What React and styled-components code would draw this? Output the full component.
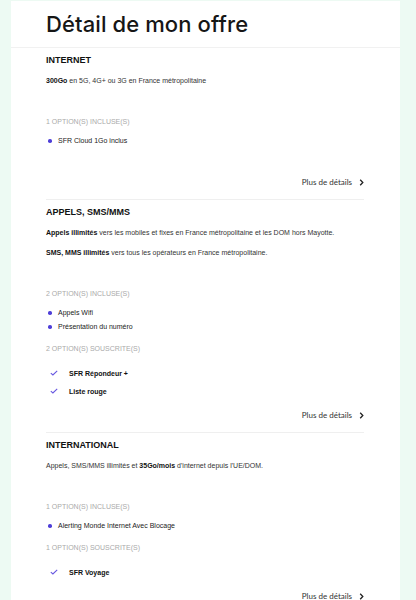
import React from "react";
import styled, { createGlobalStyle } from "styled-components";

const Global = createGlobalStyle`
  html, body { margin: 0; padding: 0; background: #edfaf3; }
  body { font-family: "Liberation Sans", Arial, sans-serif; }
  * { box-sizing: border-box; }
`;

const Page = styled.div`
  padding: 1px 16px 0 11px;
`;

const Card = styled.div`
  background: #fff;
  min-height: 600px;
`;

const Header = styled.header`
  height: 47px;
  display: flex;
  align-items: center;
  padding: 0 35px;
  border-bottom: 1px solid #f1f1f1;
`;

const Title = styled.h1`
  margin: 0;
  font-family: Inter, "Open Sans", sans-serif;
  font-weight: 500;
  font-size: 22px;
  color: #161616;
  letter-spacing: 0.1px;
`;

const Content = styled.div`
  padding: 0 36px 0 35px;
`;

const Section = styled.section`
  padding: 6px 0 11px;
  border-bottom: ${(p) => (p.$last ? "none" : "1px solid #efefef")};
`;

const Heading = styled.h2`
  margin: 0;
  font-size: 9px;
  line-height: 12px;
  font-weight: 700;
  color: #111;
`;

const Para = styled.p`
  margin: 10px 0 0;
  font-size: 7px;
  line-height: 10px;
  color: #333;
  b { color: #111; font-weight: 700; }
`;

const Label = styled.div`
  margin-top: ${(p) => p.$mt}px;
  font-size: 7px;
  line-height: 10px;
  color: #aaa;
  text-transform: uppercase;
`;

const BulletList = styled.ul`
  list-style: none;
  margin: 9px 0 0;
  padding: 0;
  display: flex;
  flex-direction: column;
  gap: 4px;
`;

const Bullet = styled.li`
  display: flex;
  align-items: center;
  font-size: 7px;
  line-height: 10px;
  color: #222;
  &::before {
    content: "";
    flex: none;
    width: 3.5px;
    height: 3.5px;
    border-radius: 50%;
    background: #4f3fd8;
    margin: 0 6.5px 0 2px;
  }
`;

const CheckList = styled.ul`
  list-style: none;
  margin: 10px 0 0;
  padding: 0;
`;

const CheckItem = styled.li`
  display: flex;
  align-items: center;
  height: 18px;
  font-size: 7px;
  font-weight: 700;
  color: #111;
  svg { margin: 0 11px 0 4px; flex: none; }
`;

const MoreRow = styled.div`
  margin-top: ${(p) => p.$mt}px;
  display: flex;
  justify-content: flex-end;
  align-items: center;
  height: 12px;
`;

const MoreLink = styled.a`
  display: flex;
  align-items: center;
  gap: 7px;
  font-family: Lato, "Open Sans", sans-serif;
  font-size: 8px;
  color: #333;
  text-decoration: none;
`;

const Check = () => (
  <svg width="8" height="6" viewBox="0 0 8 6">
    <path d="M0.8 3.2 L2.9 5 L7.2 0.8" fill="none" stroke="#6757e0" strokeWidth="1.1" />
  </svg>
);

const Chevron = () => (
  <svg width="5" height="7" viewBox="0 0 5 7">
    <path d="M1.2 0.8 L3.8 3.5 L1.2 6.2" fill="none" stroke="#222" strokeWidth="1.3" />
  </svg>
);

const More = ({ mt }) => (
  <MoreRow $mt={mt}>
    <MoreLink href="#">
      Plus de détails <Chevron />
    </MoreLink>
  </MoreRow>
);

export default function App() {
  return (
    <>
      <Global />
      <Page>
        <Card>
          <Header>
            <Title>Détail de mon offre</Title>
          </Header>
          <Content>
            <Section>
              <Heading>INTERNET</Heading>
              <Para>
                <b>300Go</b> en 5G, 4G+ ou 3G en France métropolitaine
              </Para>
              <Label $mt={31}>1 option(s) incluse(s)</Label>
              <BulletList>
                <Bullet>SFR Cloud 1Go inclus</Bullet>
              </BulletList>
              <More mt={30} />
            </Section>
            <Section>
              <Heading>APPELS, SMS/MMS</Heading>
              <Para>
                <b>Appels illimités</b> vers les mobiles et fixes en France métropolitaine et les DOM hors Mayotte.
              </Para>
              <Para>
                <b>SMS, MMS illimités</b> vers tous les opérateurs en France métropolitaine.
              </Para>
              <Label $mt={31}>2 option(s) incluse(s)</Label>
              <BulletList>
                <Bullet>Appels Wifi</Bullet>
                <Bullet>Présentation du numéro</Bullet>
              </BulletList>
              <Label $mt={12}>2 option(s) souscrite(s)</Label>
              <CheckList>
                <CheckItem><Check />SFR Répondeur +</CheckItem>
                <CheckItem><Check />Liste rouge</CheckItem>
              </CheckList>
              <More mt={9} />
            </Section>
            <Section $last>
              <Heading>INTERNATIONAL</Heading>
              <Para>
                Appels, SMS/MMS illimités et <b>35Go/mois</b> d'internet depuis l'UE/DOM.
              </Para>
              <Label $mt={31}>1 option(s) incluse(s)</Label>
              <BulletList>
                <Bullet>Alerting Monde Internet Avec Blocage</Bullet>
              </BulletList>
              <Label $mt={12}>1 option(s) souscrite(s)</Label>
              <CheckList>
                <CheckItem><Check />SFR Voyage</CheckItem>
              </CheckList>
              <More mt={9} />
            </Section>
          </Content>
        </Card>
      </Page>
    </>
  );
}
